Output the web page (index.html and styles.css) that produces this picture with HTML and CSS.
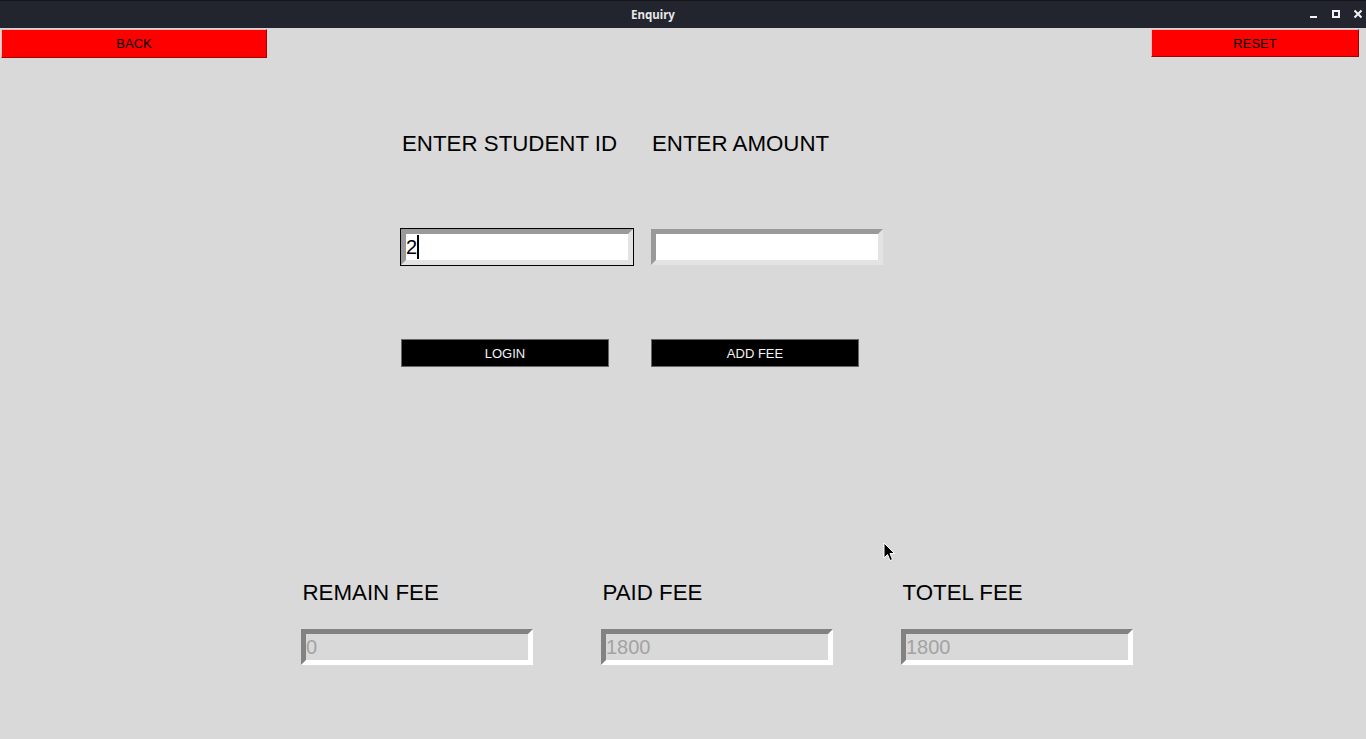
FILE: index.html
```html
<!DOCTYPE html>
<html>
<head>
<meta charset="utf-8">
<title>Enquiry</title>
<link rel="stylesheet" href="styles.css">
</head>
<body>
<div class="titlebar">
  <div class="title">Enquiry</div>
  <div class="controls">
    <svg width="60" height="28" viewBox="0 0 60 28">
      <rect x="4" y="16" width="7" height="2" fill="#f2f2f2"/>
      <rect x="27" y="11" width="6" height="6" fill="none" stroke="#f2f2f2" stroke-width="2"/>
      <path d="M48.5 10.5 L55.5 17.5 M55.5 10.5 L48.5 17.5" stroke="#f2f2f2" stroke-width="2" fill="none"/>
    </svg>
  </div>
</div>

<div class="toolbar">
  <div class="redbtn back">BACK</div>
  <div class="redbtn reset">RESET</div>
</div>

<div class="topgrid">
  <div class="label">ENTER STUDENT ID</div>
  <div class="label">ENTER AMOUNT</div>
  <div class="entry focus"><div class="field">2<span class="caret"></span></div></div>
  <div class="entry"><div class="field"></div></div>
  <div class="darkbtn">LOGIN</div>
  <div class="darkbtn">ADD FEE</div>
</div>

<div class="bottomgrid">
  <div class="label">REMAIN FEE</div>
  <div class="label">PAID FEE</div>
  <div class="label">TOTEL FEE</div>
  <div class="entry"><div class="field ro">0</div></div>
  <div class="entry"><div class="field ro">1800</div></div>
  <div class="entry"><div class="field ro">1800</div></div>
</div>

<svg class="mouse" width="13" height="20" viewBox="0 0 13 20">
  <path d="M1 1 L1 16 L4.5 12.5 L7 18.5 L9.5 17.5 L7 11.5 L11.5 11.5 Z" fill="#000" stroke="#fff" stroke-width="1" stroke-linejoin="round"/>
</svg>
</body>
</html>
```

FILE: styles.css
```css
html, body {
  margin: 0;
  padding: 0;
}
body {
  background: #d9d9d9;
  width: 1366px;
  height: 739px;
  overflow: hidden;
  font-family: "Liberation Sans", Arial, sans-serif;
  position: relative;
}
.titlebar {
  height: 28px;
  box-sizing: border-box;
  background: #22252e;
  border-top: 1px solid #14161a;
  display: flex;
  align-items: center;
}
.title {
  flex: 1;
  text-align: center;
  font-family: "Noto Sans", "DejaVu Sans", sans-serif;
  font-weight: bold;
  font-size: 11.5px;
  color: #e8e8e8;
  line-height: 26px;
}
.controls {
  width: 60px;
  height: 27px;
}
.controls svg {
  display: block;
  margin-top: -1px;
}
.toolbar {
  height: 31px;
  display: flex;
  justify-content: space-between;
  align-items: flex-start;
  padding-right: 6px;
}
.redbtn {
  margin: 1px;
  box-sizing: border-box;
  background: #ff0000;
  border: 1px solid;
  border-color: #efb8b8 #a80000 #a80000 #efb8b8;
  font-size: 13px;
  color: #000;
  display: flex;
  align-items: center;
  justify-content: center;
}
.back {
  width: 266px;
  height: 29px;
}
.reset {
  width: 208px;
  height: 28px;
}
.topgrid {
  margin-top: 72px;
  padding-left: 400px;
  display: grid;
  grid-template-columns: 250px 250px;
  grid-template-rows: 25px 38px 30px;
  row-gap: 72px;
}
.label {
  font-size: 22.3px;
  line-height: 25px;
  color: #000;
  white-space: nowrap;
  padding-left: 2px;
}
.bottomgrid .label {
  padding-left: 2.5px;
}
.entry {
  width: 234px;
  height: 38px;
  box-sizing: border-box;
  border: 1px solid #d9d9d9;
}
.entry.focus {
  border-color: #000;
}
.field {
  height: 100%;
  box-sizing: border-box;
  border: 5px solid;
  border-color: #9a9a9a #e3e3e3 #e3e3e3 #9a9a9a;
  background: #fff;
  font-size: 20px;
  line-height: 26px;
  color: #000;
  display: flex;
  align-items: stretch;
}
.field.ro {
  border-color: #828282 #ffffff #ffffff #828282;
  background: #d9d9d9;
  color: #a3a3a3;
}
.caret {
  width: 2px;
  margin: 1px 0 1px 0;
  background: #000;
}
.darkbtn {
  margin: 1px;
  width: 208px;
  height: 28px;
  box-sizing: border-box;
  background: #000;
  border: 1px solid #666;
  color: #f4f4f4;
  font-size: 13px;
  display: flex;
  align-items: center;
  justify-content: center;
}
.bottomgrid {
  margin-top: 212px;
  padding-left: 300px;
  display: grid;
  grid-template-columns: 300px 300px 300px;
  grid-template-rows: 25px 38px;
  row-gap: 23px;
}
.mouse {
  position: absolute;
  left: 883px;
  top: 542px;
}
```
